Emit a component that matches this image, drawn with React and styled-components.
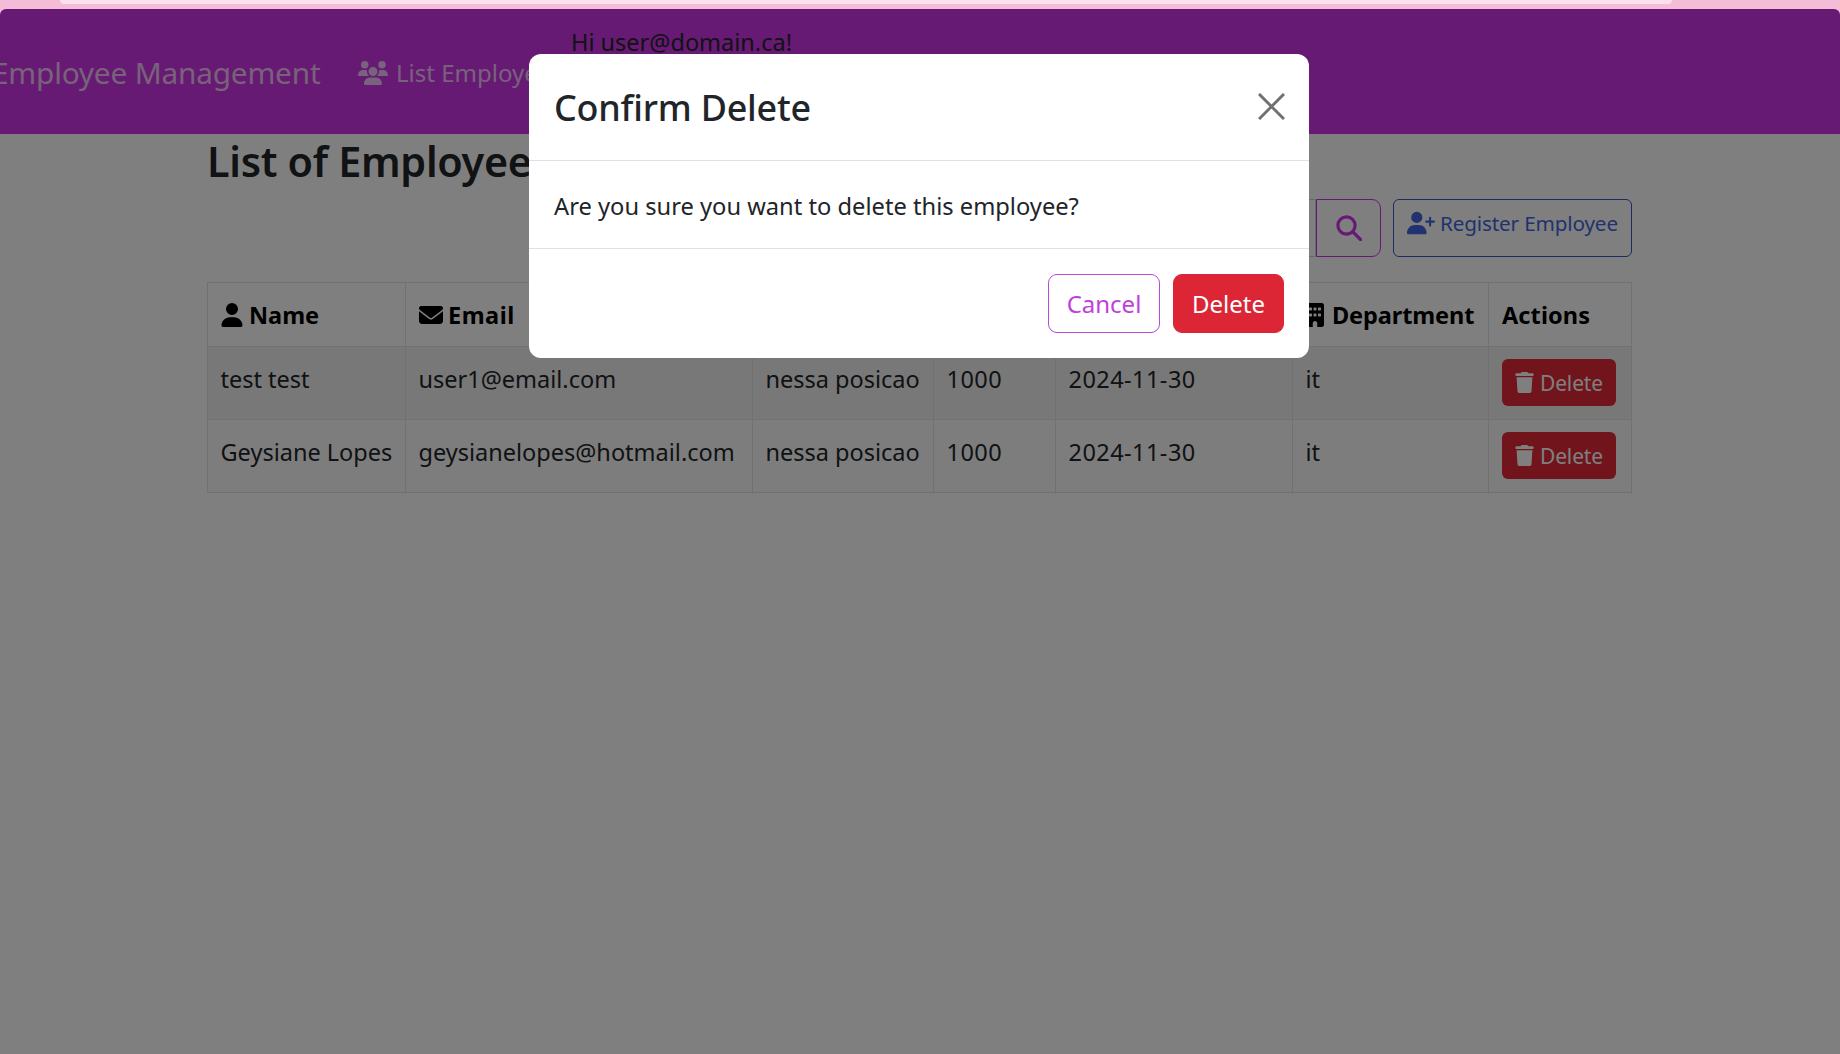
import React from 'react';
import styled, { createGlobalStyle } from 'styled-components';
import { FaUsers, FaUser, FaEnvelope, FaBuilding, FaTrash, FaUserPlus, FaBriefcase, FaDollarSign, FaCalendar } from 'react-icons/fa6';

const Global = createGlobalStyle`
  html, body { margin: 0; padding: 0; width: 1840px; height: 1054px; overflow: hidden; background: #fff; }
  body { font-family: "Noto Sans", "Open Sans", sans-serif; font-size: 24px; color: #212529; }
  * { box-sizing: border-box; }
`;

const Frame = styled.div`
  position: relative;
  width: 1840px;
  height: 1054px;
  overflow: hidden;
  background: #f5bcd7;
`;
const BrowserStrip = styled.div`
  height: 9px;
  padding: 0 168px 0 60px;
`;
const AddressBar = styled.div`
  height: 4px;
  background: #fbdfee;
  border-radius: 0 0 10px 10px;
`;
const Viewport = styled.div`
  position: relative;
  height: 1045px;
  background: #fff;
  border-radius: 6px 6px 0 0;
  overflow: hidden;
`;
const Nav = styled.nav`
  display: flex;
  align-items: center;
  height: 125px;
  padding-top: 2px;
  background: #ce34e6;
  color: rgba(255, 255, 255, 0.72);
`;
const Brand = styled.span`
  margin-left: -8px;
  width: 328px;
  flex: none;
  font-size: 29.8px;
  white-space: nowrap;
  letter-spacing: -0.2px;
`;
const NavLink = styled.span`
  display: flex;
  align-items: center;
  gap: 8px;
  margin-left: 38px;
  width: 213px;
  flex: none;
  font-size: 24px;
  white-space: nowrap;
  svg { width: 30px; height: 24px; flex: none; }
`;
const Greeting = styled.span`
  align-self: flex-start;
  margin: 12px 0 0 0;
  font-size: 23.5px;
  line-height: 38px;
  color: #212529;
  white-space: nowrap;
`;
const Main = styled.main`
  padding: 0 208px 0 207px;
`;
const Title = styled.h1`
  margin: 0;
  height: 65px;
  font-size: 41.3px;
  font-weight: 600;
  line-height: 55px;
  letter-spacing: -0.3px;
`;
const Toolbar = styled.div`
  display: flex;
  justify-content: flex-end;
  gap: 12px;
  height: 58px;
`;
const SearchGroup = styled.form`
  display: flex;
  width: 500px;
  margin: 0;
`;
const SearchInput = styled.input`
  flex: 1;
  min-width: 0;
  border: 1px solid #ced4da;
  border-radius: 9px 0 0 9px;
  font: inherit;
`;
const SearchButton = styled.button`
  width: 65px;
  display: grid;
  place-items: center;
  background: transparent;
  border: 1px solid #ce34e6;
  border-radius: 0 9px 9px 0;
  color: #ce34e6;
  padding: 0;
  svg { width: 26px; height: 26px; }
`;
const RegisterButton = styled.button`
  width: 239px;
  display: flex;
  align-items: flex-start;
  gap: 5px;
  padding: 11px 0 0 13px;
  background: transparent;
  border: 1px solid #3a55c8;
  border-radius: 6px;
  color: #4565dc;
  font: inherit;
  font-size: 20.7px;
  line-height: 24px;
  white-space: nowrap;
  letter-spacing: -0.15px;
  svg { width: 28px; height: 24px; flex: none; }
`;
const Table = styled.table`
  margin-top: 25px;
  width: 1424px;
  table-layout: fixed;
  border-collapse: collapse;
  font-size: 23.5px;
`;
const Head = styled.th`
  height: 64px;
  padding: 0 12px 0 ${p => p.$pad || 12}px;
  border: 1px solid #dee2e6;
  text-align: left;
  font-weight: 700;
  color: #000;
  white-space: nowrap;
  letter-spacing: ${p => p.$track || 0}px;
  svg { width: 24px; height: 24px; vertical-align: -3px; margin-right: 5px; }
`;
const Row = styled.tr`
  height: 73px;
  background: ${p => (p.$striped ? 'rgba(0,0,0,0.06)' : 'rgba(0,0,0,0.02)')};
`;
const Cell = styled.td`
  padding: 15px 12px 0 12.5px;
  border: 1px solid #dee2e6;
  vertical-align: top;
  line-height: 34px;
  white-space: nowrap;
  color: #212529;
  letter-spacing: ${p => (p.$digits ? '0.45px' : '0')};
`;
const ActionCell = styled(Cell)`
  padding-top: 12px;
  padding-left: 13px;
`;
const RowDelete = styled.button`
  display: flex;
  align-items: center;
  gap: 6px;
  width: 114px;
  height: 47px;
  padding: 0 0 0 13px;
  border: 0;
  border-radius: 6px;
  background: #e32838;
  color: #fff;
  font: inherit;
  font-size: 21px;
  letter-spacing: -0.15px;
  svg { width: 19px; height: 21px; }
`;
const Overlay = styled.div`
  position: absolute;
  left: 0;
  top: 9px;
  width: 1840px;
  height: 1045px;
  background: rgba(0, 0, 0, 0.5);
  border-radius: 6px 6px 0 0;
`;
const Modal = styled.div`
  position: absolute;
  left: 529px;
  top: 54px;
  width: 780px;
  height: 304px;
  display: flex;
  flex-direction: column;
  background: #fff;
  border-radius: 12px;
  overflow: hidden;
`;
const ModalHeader = styled.header`
  display: flex;
  justify-content: space-between;
  height: 107px;
  padding: 0 25px;
  border-bottom: 1px solid #dee2e6;
`;
const ModalTitle = styled.h5`
  margin: 0;
  font-size: 35.9px;
  font-weight: 500;
  line-height: 108px;
  letter-spacing: -0.2px;
`;
const CloseButton = styled.button`
  width: 27px;
  height: 27px;
  margin-top: 39px;
  padding: 0;
  background: none;
  border: 0;
  color: #707070;
  position: relative;
  left: 1px;
  svg { display: block; width: 27px; height: 27px; }
`;
const ModalBody = styled.div`
  height: 88px;
  padding: 0 25px;
  border-bottom: 1px solid #dee2e6;
  font-size: 23.7px;
  line-height: 90px;
  white-space: nowrap;
`;
const ModalFooter = styled.footer`
  display: flex;
  justify-content: flex-end;
  gap: 13px;
  padding: 25px 25px 0;
`;
const FooterButton = styled.button`
  height: 59px;
  width: ${p => p.$w}px;
  padding: 0;
  border-radius: 9px;
  border: 1px solid ${p => (p.$danger ? '#dc2535' : '#b84ad4')};
  background: ${p => (p.$danger ? '#dc2535' : '#fff')};
  color: ${p => (p.$danger ? '#fff' : '#c23edc')};
  font: inherit;
  font-size: 24px;
`;

const employees = [
  { name: 'test test', email: 'user1@email.com', striped: true },
  { name: 'Geysiane Lopes', email: 'geysianelopes@hotmail.com', striped: false },
];
const widths = [198, 347, 181, 122, 237, 196, 143];

export default function App() {
  return (
    <Frame>
      <Global />
      <BrowserStrip><AddressBar /></BrowserStrip>
      <Viewport>
        <Nav>
          <Brand>Employee Management</Brand>
          <NavLink><FaUsers /> List Employees</NavLink>
          <Greeting>Hi user@domain.ca!</Greeting>
        </Nav>
        <Main>
          <Title>List of Employees</Title>
          <Toolbar>
            <SearchGroup>
              <SearchInput placeholder="" />
              <SearchButton type="button">
                <svg viewBox="0 0 26 26" fill="none" stroke="currentColor" strokeWidth="3.2" strokeLinecap="round">
                  <circle cx="10.5" cy="10.5" r="8.6" />
                  <path d="M17 17 L24.5 24.5" />
                </svg>
              </SearchButton>
            </SearchGroup>
            <RegisterButton type="button"><FaUserPlus /> Register Employee</RegisterButton>
          </Toolbar>
          <Table>
            <colgroup>{widths.map((w, i) => <col key={i} style={{ width: w }} />)}</colgroup>
            <thead>
              <tr>
                <Head><FaUser />Name</Head>
                <Head $pad={13} $track={0.5}><FaEnvelope />Email</Head>
                <Head><FaBriefcase />Position</Head>
                <Head><FaDollarSign />Salary</Head>
                <Head><FaCalendar />Hire Date</Head>
                <Head $pad={10} $track={-0.1}><FaBuilding />Department</Head>
                <Head $pad={13} $track={0.1}>Actions</Head>
              </tr>
            </thead>
            <tbody>
              {employees.map(e => (
                <Row key={e.email} $striped={e.striped}>
                  <Cell>{e.name}</Cell>
                  <Cell>{e.email}</Cell>
                  <Cell>nessa posicao</Cell>
                  <Cell $digits>1000</Cell>
                  <Cell $digits>2024-11-30</Cell>
                  <Cell>it</Cell>
                  <ActionCell><RowDelete type="button"><FaTrash /> Delete</RowDelete></ActionCell>
                </Row>
              ))}
            </tbody>
          </Table>
        </Main>
      </Viewport>
      <Overlay />
      <Modal>
        <ModalHeader>
          <ModalTitle>Confirm Delete</ModalTitle>
          <CloseButton type="button" aria-label="Close">
            <svg viewBox="0 0 27 27"><path d="M1 1 L26 26 M26 1 L1 26" stroke="currentColor" strokeWidth="3" fill="none" /></svg>
          </CloseButton>
        </ModalHeader>
        <ModalBody>Are you sure you want to delete this employee?</ModalBody>
        <ModalFooter>
          <FooterButton $w={112}>Cancel</FooterButton>
          <FooterButton $w={111} $danger>Delete</FooterButton>
        </ModalFooter>
      </Modal>
    </Frame>
  );
}
